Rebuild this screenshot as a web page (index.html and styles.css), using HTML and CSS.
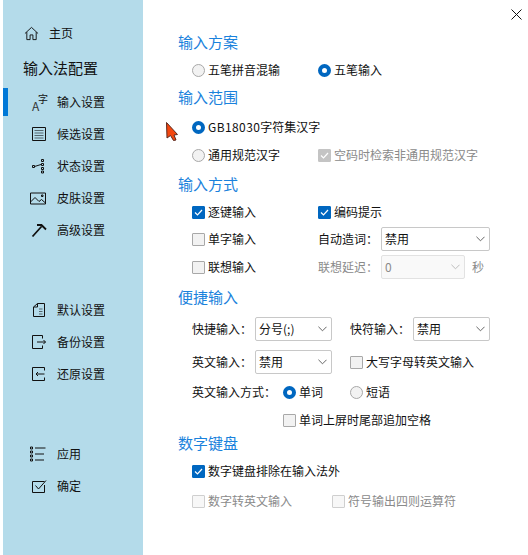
FILE: index.html

```html
<!DOCTYPE html>
<html lang="zh-CN">
<head>
    <meta charset="UTF-8">
    <title>输入法配置</title>
    <link rel="stylesheet" href="styles.css">
</head>
<body>
    <aside class="sidebar">
        <div class="home">
            <svg class="icon" viewBox="0 0 16 16"><path d="M1 8 8 1.500 15 8M3 6.500V14.500H6.500V9.500H9.500V14.500H13V6.500"/></svg>
            <span>主页</span>
        </div>
        <div class="side-title">输入法配置</div>

        <nav class="nav-group">
            <div class="nav-item active">
                <span class="nav-icon glyphs"><i class="g-a">A</i><i class="g-z">字</i></span>
                <span>输入设置</span>
            </div>
            <div class="nav-item">
                <svg class="nav-icon" viewBox="0 0 16 16"><path d="M1.500 1.500H14.500V14.500H1.500Z"/><path class="soft" d="M3.500 4.500H12.500M3.500 7H12.500M3.500 9.500H12.500M3.500 12H12.500"/></svg>
                <span>候选设置</span>
            </div>
            <div class="nav-item">
                <svg class="nav-icon" viewBox="0 0 16 16"><path d="M1.500 7.500H3.500V9.500H1.500ZM3.500 8.500 10 6.500M10.500 1.500H12.500V3.500H10.500ZM10.500 5.500H12.500V7.500H10.500ZM10.500 9.500H12.500V11.500H10.500ZM10.500 13H12.500V15H10.500Z"/></svg>
                <span>状态设置</span>
            </div>
            <div class="nav-item">
                <svg class="nav-icon wide" viewBox="0 0 16 13"><path d="M.5 1.500H15.500V12.500H.5ZM.5 10.500 5 6 9 10 11.500 8 15.500 11.500M11.500 3.500H13V5H11.500Z"/></svg>
                <span>皮肤设置</span>
            </div>
            <div class="nav-item">
                <svg class="nav-icon heavy" viewBox="0 0 16 16"><path d="M1.500 14.500 10.500 4.500M6 3H10.500L15 7.500"/></svg>
                <span>高级设置</span>
            </div>
        </nav>

        <nav class="nav-group">
            <div class="nav-item">
                <svg class="nav-icon" viewBox="0 0 16 16"><path d="M6.500 1.500H13.500V14.500H2.500V5ZM6.500 1.500V5H2.500"/><path class="soft" d="M8 7H11.500M8 9.500H11.500M8 12H11.500"/></svg>
                <span>默认设置</span>
            </div>
            <div class="nav-item">
                <svg class="nav-icon" viewBox="0 0 16 16"><path d="M11.500 4.500V1.500H1.500V14.500H11.500V11.500M6 8H14.500M12.500 6 14.500 8 12.500 10"/></svg>
                <span>备份设置</span>
            </div>
            <div class="nav-item">
                <svg class="nav-icon" viewBox="0 0 16 16"><path d="M13.500 4.500V1.500H1.500V14.500H13.500V11.500M5 8H13.500M7 6 5 8 7 10"/></svg>
                <span>还原设置</span>
            </div>
        </nav>

        <nav class="nav-group">
            <div class="nav-item">
                <svg class="nav-icon wide" viewBox="0 0 16 15"><path d="M.5 .5H2.500V2.500H.5ZM.5 4.500H2.500V6.500H.5ZM.5 8.500H2.500V10.500H.5ZM.5 12.500H2.500V14.500H.5ZM5 1.500H15.500M5 7.500H14M5 13.500H14"/></svg>
                <span>应用</span>
            </div>
            <div class="nav-item">
                <svg class="nav-icon" viewBox="0 0 16 16"><path d="M13.500 7V14.500H1.500V3.500H13.500M4.500 7.500 7.500 11 15 2.500"/></svg>
                <span>确定</span>
            </div>
        </nav>
    </aside>

    <main class="content">
        <svg class="close" viewBox="0 0 11 11"><path d="M.5 .5 10.500 10.500M10.500 .5 .5 10.500"/></svg>

        <h3 class="heading">输入方案</h3>
        <div class="row mt3">
            <label class="opt col"><span class="radio"></span>五笔拼音混输</label>
            <label class="opt"><span class="radio on"></span>五笔输入</label>
        </div>

        <h3 class="heading mt4">输入范围</h3>
        <div class="row mt5">
            <label class="opt"><span class="radio on"></span><span><span class="latin">GB18030</span>字符集汉字</span></label>
        </div>
        <div class="row mt4">
            <label class="opt col"><span class="radio"></span>通用规范汉字</label>
            <label class="opt off"><span class="check grey"><svg viewBox="0 0 13 13"><path d="M3 6.500 5.500 9 10 4"/></svg></span>空码时检索非通用规范汉字</label>
        </div>

        <h3 class="heading mt6">输入方式</h3>
        <div class="row mt3">
            <label class="opt col"><span class="check on"><svg viewBox="0 0 13 13"><path d="M3 6.500 5.500 9 10 4"/></svg></span>逐键输入</label>
            <label class="opt"><span class="check on"><svg viewBox="0 0 13 13"><path d="M3 6.500 5.500 9 10 4"/></svg></span>编码提示</label>
        </div>
        <div class="row mt3">
            <label class="opt col"><span class="check"></span>单字输入</label>
            <span class="lbl">自动造词：</span>
            <div class="select w109">禁用<svg viewBox="0 0 10 6"><path d="M.5 .5 5 5 9.500 .5"/></svg></div>
        </div>
        <div class="row mt4">
            <label class="opt col"><span class="check"></span>联想输入</label>
            <span class="lbl off">联想延迟：</span>
            <div class="select w84 disabled">0<svg viewBox="0 0 10 6"><path d="M.5 .5 5 5 9.500 .5"/></svg></div>
            <span class="unit off">秒</span>
        </div>

        <h3 class="heading mt7">便捷输入</h3>
        <div class="row mt7">
            <span class="lbl">快捷输入：</span>
            <div class="select w77">分号(;)<svg viewBox="0 0 10 6"><path d="M.5 .5 5 5 9.500 .5"/></svg></div>
            <span class="lbl second">快符输入：</span>
            <div class="select w77">禁用<svg viewBox="0 0 10 6"><path d="M.5 .5 5 5 9.500 .5"/></svg></div>
        </div>
        <div class="row mt9">
            <span class="lbl">英文输入：</span>
            <div class="select w77">禁用<svg viewBox="0 0 10 6"><path d="M.5 .5 5 5 9.500 .5"/></svg></div>
            <label class="opt second"><span class="check"></span>大写字母转英文输入</label>
        </div>
        <div class="row mt6">
            <span class="lbl long">英文输入方式：</span>
            <label class="opt w67"><span class="radio on"></span>单词</label>
            <label class="opt"><span class="radio"></span>短语</label>
        </div>
        <div class="row mt4 indent">
            <label class="opt"><span class="check"></span>单词上屏时尾部追加空格</label>
        </div>

        <h3 class="heading">数字键盘</h3>
        <div class="row mt3">
            <label class="opt"><span class="check on"><svg viewBox="0 0 13 13"><path d="M3 6.500 5.500 9 10 4"/></svg></span>数字键盘排除在输入法外</label>
        </div>
        <div class="row mt6">
            <label class="opt off w140"><span class="check faint"></span>数字转英文输入</label>
            <label class="opt off"><span class="check faint"></span>符号输出四则运算符</label>
        </div>

        <svg class="cursor" viewBox="0 0 12 19"><path class="cursor-fill" d="M.5 .5 11.500 12.500 8 13 10 18 7.500 18.500 4.500 13.500 1 16Z"/></svg>
    </main>
</body>
</html>
```

FILE: styles.css

```css
* {
    margin: 0;
    padding: 0;
    box-sizing: border-box;
}

body {
    display: flex;
    height: 555px;
    overflow: hidden;
    background-color: #fff;
    color: #111;
    font-family: "Noto Sans CJK SC", "Liberation Sans", sans-serif;
    font-size: 12px;
    line-height: 16px;
}

svg {
    fill: none;
    stroke: #111;
    stroke-width: 1;
}

/* Sidebar */
.sidebar {
    flex: none;
    width: 140px;
    margin-left: 3px;
    padding-top: 17px;
    background-color: #b4dbea;
}

.home {
    display: flex;
    align-items: center;
    gap: 10px;
    height: 32px;
    padding-left: 21px;
}

.home .icon {
    width: 15px;
    height: 15px;
}

.side-title {
    height: 37px;
    padding-left: 20px;
    font-size: 15px;
    line-height: 37px;
}

.nav-group {
    margin-bottom: 48px;
}

.nav-item {
    position: relative;
    display: flex;
    align-items: center;
    height: 32px;
    padding-left: 54px;
}

.nav-item.active::before {
    content: '';
    position: absolute;
    left: 0;
    top: 2px;
    width: 5px;
    height: 28px;
    background-color: #0078d7;
}

.nav-icon {
    position: absolute;
    left: 28px;
    top: 8px;
    width: 16px;
    height: 16px;
}

.nav-icon.wide {
    left: 27px;
}

.nav-icon.heavy {
    stroke-width: 1.8;
}

.nav-icon .soft {
    stroke: #55666e;
}

.glyphs i {
    position: absolute;
    font-style: normal;
    line-height: 10px;
}

.glyphs .g-a {
    left: 1px;
    top: 7px;
    font-size: 12px;
    color: #333;
}

.glyphs .g-z {
    left: 7px;
    top: 0;
    font-size: 10px;
}

/* Content */
.content {
    position: relative;
    flex: 1;
    padding: 31px 0 0 35px;
}

.close {
    position: absolute;
    left: 368px;
    top: 9px;
    width: 11px;
    height: 11px;
}

.cursor {
    position: absolute;
    left: 23px;
    top: 122px;
    width: 12px;
    height: 19px;
}

.cursor-fill {
    fill: #f4470f;
    stroke: #5a2a20;
}

.heading {
    height: 24px;
    color: #1a82dc;
    font-size: 15px;
    font-weight: normal;
    line-height: 22px;
}

.row {
    display: flex;
    align-items: center;
    height: 24px;
    padding-left: 14px;
}

.indent {
    padding-left: 105px;
}

.mt3 { margin-top: 3px; }
.mt4 { margin-top: 4px; }
.mt5 { margin-top: 5px; }
.mt6 { margin-top: 6px; }
.mt7 { margin-top: 7px; }
.mt9 { margin-top: 9px; }

.opt {
    display: flex;
    align-items: center;
    gap: 3px;
}

.latin {
    letter-spacing: .4px;
}

.col {
    width: 126px;
}

.w67 {
    width: 67px;
}

.w140 {
    width: 140px;
}

.off {
    color: #8a8a8a;
}

.lbl {
    flex: none;
    width: 63px;
}

.lbl.long {
    width: 91px;
}

.second {
    margin-left: 18px;
}

.unit {
    margin-left: 7px;
}

/* Radios and checkboxes */
.radio,
.check {
    flex: none;
    width: 13px;
    height: 13px;
    border: 1px solid #a8a8a8;
    background-color: #f2f2f2;
}

.radio {
    border-radius: 50%;
}

.radio.on {
    border: 4.5px solid #0067c0;
    background-color: #fff;
}

.check {
    border-radius: 1px;
}

.check svg {
    display: block;
    width: 13px;
    height: 13px;
    margin: -1px;
    stroke: #fff;
    stroke-width: 1.2;
}

.check.on {
    border-color: #0067c0;
    background-color: #0067c0;
}

.check.grey {
    border-color: #c4c4c4;
    background-color: #c4c4c4;
}

.check.faint {
    border-color: #cfcfcf;
    background-color: #f7f7f7;
}

/* Dropdowns */
.select {
    flex: none;
    display: flex;
    align-items: center;
    justify-content: space-between;
    height: 24px;
    padding: 0 4px 0 3px;
    border: 1px solid #c8c8c8;
    border-radius: 2px;
    background-color: #fff;
}

.select svg {
    width: 9px;
    height: 6px;
    stroke: #555;
}

.select.disabled {
    border-color: #e2e2e2;
    background-color: #f9f9f9;
    color: #8a8a8a;
}

.select.disabled svg {
    stroke: #b5b5b5;
}

.w77 {
    width: 77px;
}

.w84 {
    width: 84px;
}

.w109 {
    width: 109px;
}
```
